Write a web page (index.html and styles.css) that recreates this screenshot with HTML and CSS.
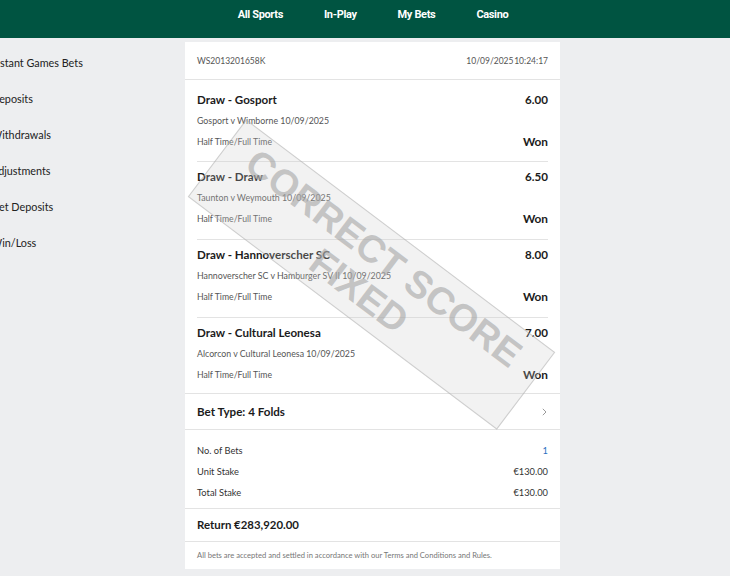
FILE: index.html
```html
<!DOCTYPE html>
<html lang="en">
<head>
    <meta charset="UTF-8">
    <meta name="viewport" content="width=device-width, initial-scale=1.0">
    <title>Bet Receipt</title>
    <link rel="stylesheet" href="styles.css">
</head>
<body>
    <header class="topbar">
        <nav class="topnav">
            <a href="#">All Sports</a>
            <a href="#">In-Play</a>
            <a href="#">My Bets</a>
            <a href="#">Casino</a>
        </nav>
    </header>

    <div class="layout">
        <!-- Menu historique -->
        <aside class="sidemenu">
            <a href="#">Instant Games Bets</a>
            <a href="#">Deposits</a>
            <a href="#">Withdrawals</a>
            <a href="#">Adjustments</a>
            <a href="#">Net Deposits</a>
            <a href="#">Win/Loss</a>
        </aside>

        <!-- Ticket -->
        <main class="slip">
            <div class="slip-head">
                <span>WS2013201658K</span>
                <span class="stamp-time">10/09/2025 10:24:17</span>
            </div>

            <div class="legs">
                <div class="leg">
                    <div class="leg-row leg-title"><span>Draw - Gosport</span><span>6.00</span></div>
                    <div class="leg-row leg-event">Gosport v Wimborne 10/09/2025</div>
                    <div class="leg-row leg-market"><span>Half Time/Full Time</span><span class="won">Won</span></div>
                </div>
                <div class="leg">
                    <div class="leg-row leg-title"><span>Draw - Draw</span><span>6.50</span></div>
                    <div class="leg-row leg-event">Taunton v Weymouth 10/09/2025</div>
                    <div class="leg-row leg-market"><span>Half Time/Full Time</span><span class="won">Won</span></div>
                </div>
                <div class="leg">
                    <div class="leg-row leg-title"><span>Draw - Hannoverscher SC</span><span>8.00</span></div>
                    <div class="leg-row leg-event">Hannoverscher SC v Hamburger SV II 10/09/2025</div>
                    <div class="leg-row leg-market"><span>Half Time/Full Time</span><span class="won">Won</span></div>
                </div>
                <div class="leg">
                    <div class="leg-row leg-title"><span>Draw - Cultural Leonesa</span><span>7.00</span></div>
                    <div class="leg-row leg-event">Alcorcon v Cultural Leonesa 10/09/2025</div>
                    <div class="leg-row leg-market"><span>Half Time/Full Time</span><span class="won">Won</span></div>
                </div>
            </div>

            <div class="bet-type">
                <span>Bet Type: 4 Folds</span>
                <svg class="chevron" width="5" height="8" viewBox="0 0 5 8"><polyline points="0.8,0.8 4,4 0.8,7.2" fill="none" stroke="#9a9a9a" stroke-width="1"/></svg>
            </div>

            <div class="summary">
                <div class="summary-row"><span>No. of Bets</span><span class="count">1</span></div>
                <div class="summary-row"><span>Unit Stake</span><span>€130.00</span></div>
                <div class="summary-row"><span>Total Stake</span><span>€130.00</span></div>
            </div>

            <div class="return">Return €283,920.00</div>

            <div class="terms">All bets are accepted and settled in accordance with our Terms and Conditions and Rules.</div>

            <div class="stamp">
                <span>CORRECT SCORE</span>
                <span>FIXED</span>
            </div>
        </main>
    </div>
</body>
</html>
```

FILE: styles.css
```css
body {
    margin: 0;
    font-family: Lato, "Liberation Sans", sans-serif;
    background-color: #edeef0;
    color: #1b1b1b;
    overflow: hidden;
}
a {
    color: inherit;
    text-decoration: none;
}
.topbar {
    height: 38px;
    background-color: #005441;
}
.topnav {
    display: flex;
    justify-content: center;
    gap: 41px;
    padding-left: 16px;
    line-height: 29px;
}
.topnav a {
    font-family: Roboto, sans-serif;
    font-weight: bold;
    font-size: 11px;
    letter-spacing: -0.35px;
    color: white;
}
.layout {
    display: flex;
    padding-top: 4px;
}
.sidemenu {
    display: flex;
    flex-direction: column;
    width: 194px;
    margin-left: -9px;
    padding-top: 3px;
    flex-shrink: 0;
}
.sidemenu a {
    height: 36px;
    line-height: 36px;
    font-size: 10.8px;
    color: #222;
}
.slip {
    position: relative;
    width: 375px;
    background: white;
    overflow: hidden;
}
.slip-head {
    display: flex;
    justify-content: space-between;
    height: 35px;
    padding: 2px 12px 0;
    line-height: 35px;
    font-size: 8.5px;
    color: #555;
    border-bottom: 1px solid #e3e3e3;
}
.stamp-time {
    word-spacing: -1.5px;
}
.legs {
    border-bottom: 1px solid #e3e3e3;
}
.leg {
    margin: 0 12px;
    padding: 5px 0 10px;
    border-bottom: 1px solid #e3e3e3;
}
.leg:first-child {
    padding: 10px 0 9px;
}
.leg:last-child {
    padding-bottom: 8px;
    border-bottom: none;
}
.leg-row {
    display: flex;
    justify-content: space-between;
    line-height: 20px;
}
.leg-title {
    font-size: 11.6px;
    font-weight: bold;
}
.leg-event {
    line-height: 22px;
    font-size: 8.8px;
    color: #555;
}
.leg-market {
    font-size: 8.7px;
    color: #555;
}
.won {
    font-size: 11.8px;
    font-weight: bold;
    color: #1b1b1b;
}
.bet-type {
    display: flex;
    justify-content: space-between;
    align-items: center;
    height: 35px;
    padding: 0 12px;
    font-size: 11.6px;
    font-weight: bold;
    border-bottom: 1px solid #e3e3e3;
}
.chevron {
    margin-right: 1px;
}
.summary {
    padding: 10px 12px 5px;
    border-bottom: 1px solid #e3e3e3;
}
.summary-row {
    display: flex;
    justify-content: space-between;
    line-height: 21px;
    font-size: 9.3px;
    color: #333;
}
.count {
    color: #2a6fbf;
}
.return {
    height: 32px;
    line-height: 32px;
    padding: 0 12px;
    font-size: 11.4px;
    font-weight: bold;
    border-bottom: 1px solid #e3e3e3;
}
.terms {
    height: 27px;
    line-height: 27px;
    padding: 0 12px;
    font-size: 7.6px;
    color: #777;
}
.stamp {
    position: absolute;
    left: -7px;
    top: 184px;
    width: 387px;
    height: 97px;
    box-sizing: border-box;
    display: flex;
    flex-direction: column;
    align-items: center;
    justify-content: center;
    transform: rotate(37deg);
    background: rgba(205, 205, 205, 0.25);
    border: 1.5px solid rgba(170, 170, 170, 0.5);
    font-family: "Liberation Sans", sans-serif;
    font-weight: bold;
    font-size: 38px;
    line-height: 41px;
    color: rgba(165, 165, 165, 0.6);
    pointer-events: none;
}
```
